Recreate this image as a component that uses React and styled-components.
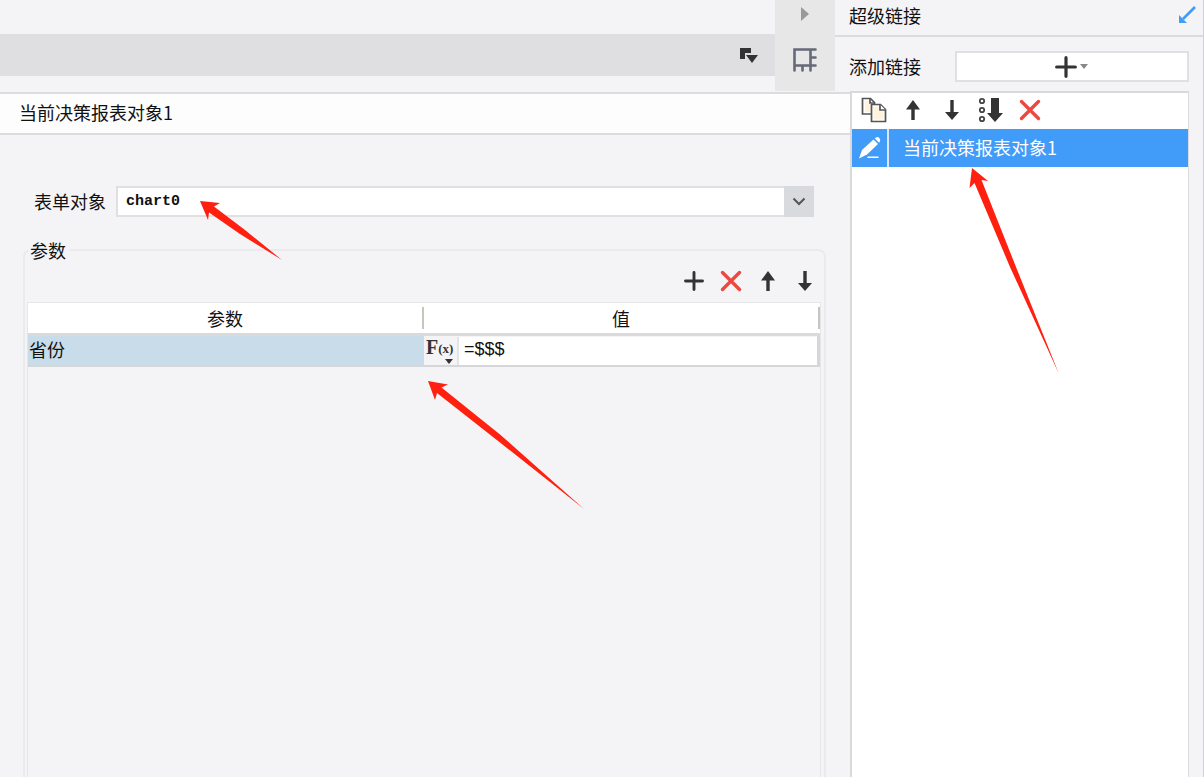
import React from 'react';
import styled, { createGlobalStyle } from 'styled-components';

const GlobalStyle = createGlobalStyle`
  *, *::before, *::after { box-sizing: border-box; }
  body {
    margin: 0;
    background: #f4f4f7;
    color: #111;
    font: 18px/24px "Noto Sans CJK SC", "Liberation Sans", sans-serif;
  }
  button, input, select { font: inherit; color: inherit; }
`;

const Page = styled.div`
  position: relative;
  display: flex;
  flex-direction: column;
  min-height: 100vh;
  overflow: hidden;
  border-right: 1px solid #d2d2d6;
`;

const TopArea = styled.div`
  display: flex;
  height: 91px;
`;

const Workspace = styled.div`
  flex: 1;
  padding-top: 34px;
`;

const WorkspaceBar = styled.div`
  display: flex;
  align-items: center;
  justify-content: flex-end;
  height: 42px;
  padding-right: 16px;
  background: #dfdfe1;
`;

const Rail = styled.div`
  display: flex;
  flex-direction: column;
  align-items: center;
  gap: 25px;
  width: 60px;
  padding-top: 6px;
  background: #e7e7e7;
`;

const IconButton = styled.button`
  display: flex;
  align-items: center;
  justify-content: center;
  width: ${(p) => p.$size || 24}px;
  height: ${(p) => p.$height || p.$size || 24}px;
  padding: 0;
  border: 0;
  background: none;
  svg { display: block; flex: none; }
`;

const Side = styled.div`
  width: 368px;
`;

const SideHeader = styled.header`
  display: flex;
  align-items: center;
  justify-content: space-between;
  height: 37px;
  padding: 0 6px 6px 14px;
  border-bottom: 2px solid #dcdcdf;
`;

const Heading = styled.h2`
  margin: 0;
  font-size: 18px;
  font-weight: 400;
`;

const AddRow = styled.div`
  display: flex;
  align-items: center;
  gap: 34px;
  padding: 14px 14px 0 14px;
  label { padding-bottom: 2px; }
`;

const AddButton = styled.button`
  display: flex;
  flex: 1;
  align-items: center;
  justify-content: center;
  gap: 3px;
  height: 31px;
  padding: 0 2px 0 0;
  border: 2px solid #e0e0e2;
  background: #fff;
`;

const BottomArea = styled.div`
  display: flex;
  flex: 1;
  padding-right: 14px;
`;

const Dialog = styled.section`
  display: flex;
  flex: 1;
  flex-direction: column;
  padding-top: 1px;
`;

const DialogTitle = styled.header`
  display: flex;
  align-items: center;
  height: 43px;
  padding: 0 0 3px 19px;
  border-top: 2px solid #dcdcdf;
  border-bottom: 2px solid #dcdcdf;
  background: #fdfdfd;
`;

const LinkPanel = styled.aside`
  width: 339px;
  border: 2px solid #d9d9db;
  border-bottom: 0;
  border-right: 1px solid #dcdcde;
  background: #fff;
`;

const LinkTools = styled.div`
  display: flex;
  align-items: center;
  gap: 15px;
  height: 36px;
  padding: 0 0 2px 10px;
`;

const LinkItem = styled.div`
  display: flex;
  height: 38px;
  background: #419bf9;
  color: #fff;
`;

const EditCell = styled.div`
  display: flex;
  align-items: center;
  justify-content: center;
  width: 37px;
  border-right: 2px solid #d8e8fa;
`;

const LinkName = styled.span`
  padding: 6px 0 0 14px;
`;

const FormRow = styled.div`
  display: flex;
  align-items: center;
  gap: 10px;
  padding: 51px 36px 0 34px;
  label { padding-bottom: 2px; }
`;

const SelectBox = styled.div`
  display: flex;
  flex: 1;
  height: 31px;
  border: 2px solid #e0e0e2;
  background: #fff;
`;

const ObjectSelect = styled.select`
  flex: 1;
  padding: 0 8px;
  border: 0;
  appearance: none;
  background: transparent;
  font: 700 15px "Liberation Mono", monospace;
`;

const SelectArrow = styled.span`
  display: flex;
  align-items: center;
  justify-content: center;
  width: 30px;
  margin: -2px;
  background: #d9dadd;
`;

const ParamGroup = styled.fieldset`
  display: flex;
  flex: 1;
  flex-direction: column;
  margin: 21px 24px 0 23px;
  padding: 0 3px 0 2px;
  border: 2px solid #eaeaed;
  border-bottom: 0;
  border-radius: 8px 8px 0 0;
`;

const Legend = styled.legend`
  margin-left: 1px;
  padding: 0 4px 0 2px;
`;

const ParamTools = styled.div`
  display: flex;
  justify-content: flex-end;
  gap: 13px;
  padding: 7px 4px 9px;
`;

const TableArea = styled.div`
  flex: 1;
  border: 1px solid #e6e6e8;
  border-bottom: 0;
`;

const ParamTable = styled.table`
  width: 100%;
  border-collapse: separate;
  border-spacing: 0;
  table-layout: fixed;
`;

const HeadCell = styled.th`
  height: 30px;
  padding: 4px 0;
  border-bottom: 3px solid #dadadc;
  background: #fff;
  font-weight: 400;
  line-height: 22px;
  span {
    display: block;
    border-right: 2px solid #c9c5be;
  }
`;

const NameCell = styled.td`
  height: 31px;
  padding: 0 0 4px 1px;
  border-bottom: 2px solid #d6d6d8;
  background: #c9dce9;
`;

const ValueCell = styled.td`
  padding: 0;
  border-right: 3px solid #d6d6d8;
  border-bottom: 2px solid #d6d6d8;
`;

const ValueEditor = styled.div`
  display: flex;
  height: 28px;
`;

const FormulaButton = styled.button`
  position: relative;
  width: 35px;
  padding: 0 0 8px 2px;
  border: 0;
  border-right: 2px solid #e4e4e6;
  background: #f4f4f6;
  color: #333;
  font: 700 20px/20px "Liberation Serif", serif;
  text-align: left;
  white-space: nowrap;
  small { font-size: 13px; vertical-align: 1px; }
  svg { position: absolute; right: 4px; bottom: 1px; }
`;

const ValueInput = styled.input`
  flex: 1;
  min-width: 0;
  padding: 0 5px 2px;
  border: 0;
  background: #fff;
  font: 18px "Liberation Sans", sans-serif;
`;

const Annotations = styled.svg`
  position: absolute;
  top: 0;
  left: 0;
  pointer-events: none;
  fill: #ff2010;
`;

const UpIcon = () => (
  <svg width="16" height="22" viewBox="0 0 16 22">
    <path d="M8 1 15 10.500H9.700V21H6.300V10.500H1Z" fill="#333" />
  </svg>
);
const DownIcon = () => (
  <svg width="16" height="22" viewBox="0 0 16 22">
    <path d="M8 21 1 13H6.300V1H9.700V13H15Z" fill="#333" />
  </svg>
);
const DeleteIcon = () => (
  <svg width="22" height="22" viewBox="0 0 22 22">
    <path d="M2.500 2.500 19.500 19.500M19.500 2.500 2.500 19.500" stroke="#ed4840" strokeWidth="3.400" strokeLinecap="round" />
  </svg>
);
const PlusIcon = ({ size }) => (
  <svg width={size} height={size} viewBox="0 0 20 20">
    <path d="M10 1.500V18.500M1.500 10H18.500" stroke="#333" strokeWidth="2.900" strokeLinecap="round" />
  </svg>
);
const CaretIcon = ({ color }) => (
  <svg width="8" height="5" viewBox="0 0 8 5">
    <path d="M0 0H8L4 5Z" fill={color} />
  </svg>
);
const CopyIcon = () => (
  <svg width="26" height="26" viewBox="0 0 26 26" stroke="#555" strokeWidth="1.700">
    <path d="M1.500 1.500H9.500L13.500 5.500V17H1.500Z" fill="#fff" />
    <path d="M4 4H9V8H11V15H4Z" fill="#fff3dc" stroke="none" />
    <path d="M9 1.500V6H13.500" fill="none" />
    <path d="M10.500 7.500H19.500L24.500 12.500V24.500H10.500Z" fill="#fff" />
    <path d="M12.500 10H18V14.500H22.500V22.500H12.500Z" fill="#fff3dc" stroke="none" />
    <path d="M19 7.500V13H24.500" fill="#fff" />
  </svg>
);
const SortIcon = () => (
  <svg width="26" height="26" viewBox="0 0 26 26">
    <g fill="none" stroke="#444" strokeWidth="1.800">
      <circle cx="4" cy="4" r="2.200" /><circle cx="4" cy="13" r="2.200" /><circle cx="4" cy="22" r="2.200" />
    </g>
    <path d="M13 1H21V16H25L17 25 9 16H13Z" fill="#333" />
  </svg>
);
const EditIcon = () => (
  <svg width="24" height="24" viewBox="0 0 24 24" fill="#fff">
    <path d="M4 14 15.500 3.500 20 8 9 18.500 1 22.500Z" />
    <path d="M16.800 2.400 18 1.400Q19.800.400 21.300 2T22 5.400L21 6.800Z" />
    <path d="M10 20.500H20.500V22H9Z" />
  </svg>
);
const FrameIcon = () => (
  <svg width="26" height="26" viewBox="0 0 26 26" fill="none" stroke="#666a78" strokeWidth="2.600" strokeLinecap="round">
    <path d="M2.500 23.500V2.500H23.500M2.500 18.500H23.500M18.500 2.500V23.500M18.500 10.500H23.500M10.500 18.500V23.500" />
  </svg>
);
const DockIcon = () => (
  <svg width="20" height="17" viewBox="0 0 20 17" fill="#333">
    <path d="M1 1H12V6H6V12H1Z" /><path d="M7 8H19L13 16Z" />
  </svg>
);
const CollapseIcon = () => (
  <svg width="18" height="18" viewBox="0 0 18 18">
    <path d="M17 1 5 13" stroke="#419bf9" strokeWidth="2.600" />
    <path d="M1 9 9 17H1Z" fill="#419bf9" />
  </svg>
);

export default function App() {
  return (
    <>
      <GlobalStyle />
      <Page>
        <TopArea>
          <Workspace>
            <WorkspaceBar>
              <IconButton $size={20} aria-label="停靠"><DockIcon /></IconButton>
            </WorkspaceBar>
          </Workspace>
          <Rail>
            <IconButton $size={20} $height={16} aria-label="展开">
              <svg width="8" height="14" viewBox="0 0 8 14"><path d="M0 0 8 7 0 14Z" fill="#999" /></svg>
            </IconButton>
            <IconButton $size={26} aria-label="组件"><FrameIcon /></IconButton>
          </Rail>
          <Side>
            <SideHeader>
              <Heading>超级链接</Heading>
              <IconButton $size={20} aria-label="收起"><CollapseIcon /></IconButton>
            </SideHeader>
            <AddRow>
              <label htmlFor="add-link">添加链接</label>
              <AddButton id="add-link">
                <PlusIcon size={22} />
                <CaretIcon color="#888" />
              </AddButton>
            </AddRow>
          </Side>
        </TopArea>

        <BottomArea>
          <Dialog>
            <DialogTitle><Heading>当前决策报表对象1</Heading></DialogTitle>
            <FormRow>
              <label htmlFor="form-object">表单对象</label>
              <SelectBox>
                <ObjectSelect id="form-object" defaultValue="chart0">
                  <option>chart0</option>
                </ObjectSelect>
                <SelectArrow>
                  <svg width="14" height="9" viewBox="0 0 14 9"><path d="M1.500 1.500 7 7 12.500 1.500" fill="none" stroke="#555" strokeWidth="2" /></svg>
                </SelectArrow>
              </SelectBox>
            </FormRow>
            <ParamGroup>
              <Legend>参数</Legend>
              <ParamTools>
                <IconButton aria-label="添加参数"><PlusIcon size={20} /></IconButton>
                <IconButton aria-label="删除参数"><DeleteIcon /></IconButton>
                <IconButton aria-label="上移参数"><UpIcon /></IconButton>
                <IconButton aria-label="下移参数"><DownIcon /></IconButton>
              </ParamTools>
              <TableArea>
                <ParamTable>
                  <thead>
                    <tr>
                      <HeadCell><span>参数</span></HeadCell>
                      <HeadCell><span>值</span></HeadCell>
                    </tr>
                  </thead>
                  <tbody>
                    <tr>
                      <NameCell>省份</NameCell>
                      <ValueCell>
                        <ValueEditor>
                          <FormulaButton aria-label="公式">
                            F<small>(x)</small>
                            <CaretIcon color="#333" />
                          </FormulaButton>
                          <ValueInput aria-label="值" defaultValue="=$$$" />
                        </ValueEditor>
                      </ValueCell>
                    </tr>
                  </tbody>
                </ParamTable>
              </TableArea>
            </ParamGroup>
          </Dialog>

          <LinkPanel>
            <LinkTools>
              <IconButton aria-label="复制"><CopyIcon /></IconButton>
              <IconButton aria-label="上移"><UpIcon /></IconButton>
              <IconButton aria-label="下移"><DownIcon /></IconButton>
              <IconButton aria-label="排序"><SortIcon /></IconButton>
              <IconButton aria-label="删除"><DeleteIcon /></IconButton>
            </LinkTools>
            <LinkItem>
              <EditCell><IconButton aria-label="编辑"><EditIcon /></IconButton></EditCell>
              <LinkName>当前决策报表对象1</LinkName>
            </LinkItem>
          </LinkPanel>
        </BottomArea>

        <Annotations width="1204" height="777" viewBox="0 0 1204 777" aria-hidden="true">
          <path d="M200 201 220 203 214 206.500 245 230 282 260 240 234 209 212.500 208 220Z" />
          <path d="M428 381 448 384.500 441.500 387.500 500 434.500 584 509 500 442.500 437 393 435 400Z" />
          <path d="M972 168 988 181 981.500 180 1016 267 1059 374 1010 267 974.500 183 969.500 188Z" />
        </Annotations>
      </Page>
    </>
  );
}
